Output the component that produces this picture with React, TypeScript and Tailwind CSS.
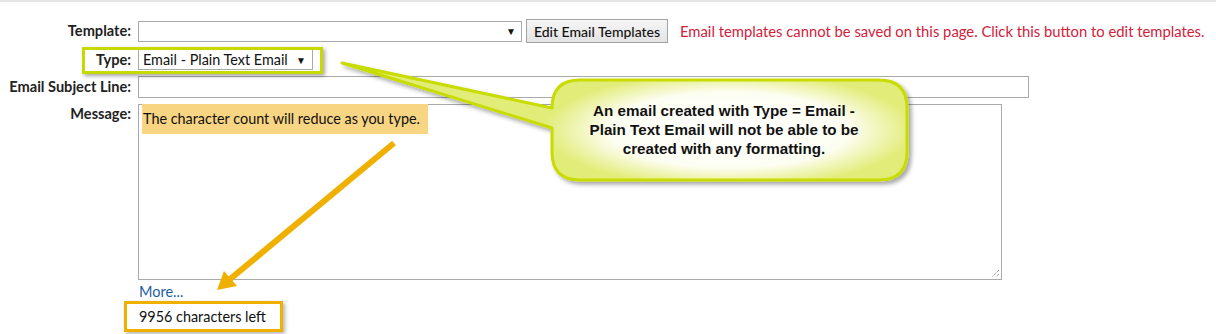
export default function App() {
  const label = "w-[131px] shrink-0 text-right text-[14.6px] font-bold text-[#222]";
  return (
    <div className="relative h-[334px] w-[1216px] overflow-hidden bg-white font-['Lato',sans-serif] text-[#111]">
      <div className="h-[2px] bg-[#e6e6e6]" />

      <div className="flex flex-col pt-[17px]">
        {/* template row */}
        <div className="flex h-[24px] items-center">
          <div className={label}>Template:</div>
          <div className="ml-[7px] flex h-[21px] w-[384px] items-center justify-end border border-[#a9a9a9] bg-white pr-[5px]">
            <span className="text-[10px] leading-none">▼</span>
          </div>
          <button className="ml-[4px] h-[24px] w-[142px] border border-[#a3a3a3] bg-gradient-to-b from-[#f6f6f6] to-[#e3e3e3] text-[14px] font-medium text-[#111]">
            Edit Email Templates
          </button>
          <div className="ml-[12px] text-[14.8px] text-[#d3203a]">
            Email templates cannot be saved on this page. Click this button to edit templates.
          </div>
        </div>

        {/* type row */}
        <div className="relative mt-[6px] flex h-[21px] items-center">
          <div className={label}>Type:</div>
          <div className="ml-[7px] flex h-[21px] w-[175px] items-center justify-between border border-[#a9a9a9] bg-white pl-[4px] pr-[6px] text-[14.4px]">
            <span>Email - Plain Text Email</span>
            <span className="text-[10px] leading-none">▼</span>
          </div>
          <div className="absolute left-[82px] top-[-2px] h-[27px] w-[241px] border-[3px] border-[#c6da00] shadow-[2px_2px_4px_rgba(0,0,0,0.35)]" />
        </div>

        {/* subject row */}
        <div className="mt-[6px] flex h-[22px] items-center">
          <div className={label}>Email Subject Line:</div>
          <div className="ml-[7px] h-[22px] w-[891px] border border-[#a9a9a9] bg-white" />
        </div>

        {/* message row */}
        <div className="mt-[6px] flex">
          <div className={`${label} leading-[20px]`}>Message:</div>
          <div className="relative ml-[7px] h-[176px] w-[864px] border border-[#a9a9a9] bg-white">
            <div className="absolute left-[3px] top-[-1px] flex h-[30px] w-[286px] items-center whitespace-nowrap bg-[#f8d583] pl-[1px] text-[14.4px] text-[#111]">
              The character count will reduce as you type.
            </div>
            <svg className="absolute bottom-[1px] right-[1px]" width="10" height="10" viewBox="0 0 10 10">
              <path d="M9 2 L2 9 M9 6 L6 9" stroke="#777" strokeWidth="1" strokeDasharray="1 1" />
            </svg>
          </div>
        </div>

        <div className="ml-[139px] mt-[4px] text-[14.5px] leading-[16px] text-[#1e5ea8]">More...</div>

        <div className="ml-[124px] mt-[1px] flex h-[31px] w-[159px] items-center border-[3px] border-[#f0b000] pl-[12px] text-[14.4px] text-[#111] shadow-[2px_2px_4px_rgba(0,0,0,0.3)]">
          9956 characters left
        </div>
      </div>

      {/* annotations */}
      <svg className="pointer-events-none absolute left-0 top-0" width="1216" height="334" viewBox="0 0 1216 334">
        <defs>
          <radialGradient id="bub" gradientUnits="userSpaceOnUse" cx="0" cy="0" r="1" gradientTransform="translate(729 130) scale(185 58)">
            <stop offset="0" stopColor="#ffffff" />
            <stop offset="0.65" stopColor="#fdfef2" />
            <stop offset="1" stopColor="#e2ec78" />
          </radialGradient>
          <filter id="sh" x="-10%" y="-10%" width="130%" height="140%">
            <feDropShadow dx="3" dy="3" stdDeviation="2" floodColor="#000" floodOpacity="0.35" />
          </filter>
        </defs>
        <path
          d="M580 80 H879 Q907 80 907 108 V152 Q907 180 879 180 H580 Q552 180 552 152 V128 L342 63 L552 108 Q552 80 580 80 Z"
          fill="url(#bub)"
          stroke="#c8dc00"
          strokeWidth="3"
          strokeLinejoin="round"
          filter="url(#sh)"
        />
        <line x1="394" y1="143" x2="229" y2="280" stroke="#f0b000" strokeWidth="6" />
        <polygon points="217,290 237,286 224,271" fill="#f0b000" />
      </svg>

      <div className="pointer-events-none absolute left-[574px] top-[101px] w-[300px] text-center font-['Liberation_Sans',Arial,sans-serif] text-[15.2px] font-bold leading-[19px] text-[#111]">
        An email created with Type = Email -<br />
        Plain Text Email will not be able to be<br />
        created with any formatting.
      </div>
    </div>
  );
}
